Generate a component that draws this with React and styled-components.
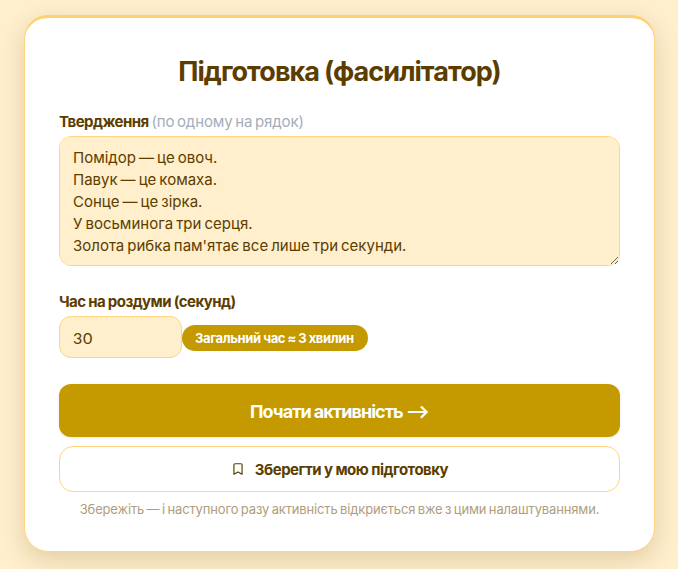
import React from 'react';
import styled, { createGlobalStyle } from 'styled-components';

const GlobalStyle = createGlobalStyle`
  html, body {
    margin: 0;
    padding: 0;
    background: #ffefcc;
    font-family: Inter, "Liberation Sans", sans-serif;
    color: #5c3d00;
  }
  * {
    box-sizing: border-box;
  }
`;

const Page = styled.div`
  min-height: 569px;
  padding: 15px 23px 14px 23.5px;
`;

const Card = styled.div`
  background: #fff;
  border: 1px solid #ffd580;
  border-top: 3px solid #ffd070;
  border-radius: 24px;
  padding: 35px 34px 33px 34.5px;
  box-shadow: 0 8px 24px rgba(92, 61, 0, 0.18);
  display: flex;
  flex-direction: column;
`;

const Title = styled.h1`
  margin: 0 0 21px;
  font-size: 27px;
  line-height: 38px;
  font-weight: 700;
  letter-spacing: -0.95px;
  word-spacing: -0.5px;
  text-align: center;
  color: #5c3d00;
`;

const Label = styled.label`
  display: block;
  font-size: 15px;
  line-height: 20px;
  font-weight: 700;
  letter-spacing: -0.55px;
  word-spacing: -0.3px;
  color: #5c3d00;
  margin-bottom: 4px;
`;

const Hint = styled.span`
  font-weight: 400;
  letter-spacing: -0.1px;
  word-spacing: -1.5px;
  color: #a3adbb;
`;

const Notes = styled.textarea`
  display: block;
  width: 100%;
  height: 130px;
  padding: 10px 13px;
  background: #ffefcc;
  border: 1px solid #ffd580;
  border-radius: 12px;
  font-family: Inter, sans-serif;
  font-size: 15px;
  line-height: 22px;
  word-spacing: -1.2px;
  color: #5c3d00;
  outline: none;
`;

const Field = styled.div`
  margin-top: 26px;
`;

const TimeRow = styled.div`
  display: flex;
  align-items: center;
`;

const TimeInput = styled.input`
  width: 123px;
  height: 42px;
  padding: 0 13px;
  background: #ffefcc;
  border: 1px solid #ffd580;
  border-radius: 12px;
  font-family: Lato, sans-serif;
  font-size: 16px;
  letter-spacing: 0.8px;
  color: #5c3d00;
  outline: none;
`;

const Badge = styled.span`
  display: inline-block;
  margin-top: 2px;
  padding: 0 14px 0 13px;
  height: 26px;
  line-height: 26px;
  background: #c49a00;
  border-radius: 13px;
  color: #fff;
  font-size: 13px;
  font-weight: 700;
  letter-spacing: -0.35px;
  word-spacing: -0.4px;
`;

const PrimaryButton = styled.button`
  display: block;
  width: 100%;
  height: 53px;
  margin-top: 26px;
  padding-top: 2px;
  background: #c49a00;
  border: none;
  border-radius: 12px;
  color: #fff;
  font-family: inherit;
  font-size: 18px;
  font-weight: 700;
  letter-spacing: -0.95px;
  word-spacing: -0.3px;
  box-shadow: 0 1px 3px rgba(92, 61, 0, 0.1);
`;

const SaveButton = styled.button`
  display: flex;
  align-items: center;
  justify-content: center;
  gap: 10px;
  width: 100%;
  height: 46px;
  margin-top: 9px;
  background: #fff;
  border: 1px solid #ffd580;
  border-radius: 14px;
  color: #5c3d00;
  font-family: inherit;
  font-size: 15px;
  font-weight: 700;
  letter-spacing: -0.5px;
  word-spacing: -0.2px;
`;

const Note = styled.p`
  margin: 8px 0 0;
  font-size: 13px;
  line-height: 18px;
  word-spacing: -1px;
  letter-spacing: -0.15px;
  text-align: center;
  color: #b09d7d;
`;

function BookmarkIcon() {
  return (
    <svg width="14" height="14" viewBox="0 0 24 24" fill="none" stroke="currentColor" strokeWidth="2" strokeLinecap="round" strokeLinejoin="round">
      <path d="m19 21-7-4-7 4V5a2 2 0 0 1 2-2h10a2 2 0 0 1 2 2v16z" />
    </svg>
  );
}

const statements = `Помідор — це овоч.
Павук — це комаха.
Сонце — це зірка.
У восьминога три серця.
Золота рибка пам'ятає все лише три секунди.`;

export default function App() {
  return (
    <Page>
      <GlobalStyle />
      <Card>
        <Title>Підготовка (фасилітатор)</Title>
        <Label>
          Твердження <Hint>(по одному на рядок)</Hint>
        </Label>
        <Notes defaultValue={statements} />
        <Field>
          <Label>Час на роздуми (секунд)</Label>
          <TimeRow>
            <TimeInput type="number" defaultValue={30} />
            <Badge>Загальний час ≈ 3 хвилин</Badge>
          </TimeRow>
        </Field>
        <PrimaryButton>Почати активність ⟶</PrimaryButton>
        <SaveButton>
          <BookmarkIcon />
          Зберегти у мою підготовку
        </SaveButton>
        <Note>Збережіть — і наступного разу активність відкриється вже з цими налаштуваннями.</Note>
      </Card>
    </Page>
  );
}
